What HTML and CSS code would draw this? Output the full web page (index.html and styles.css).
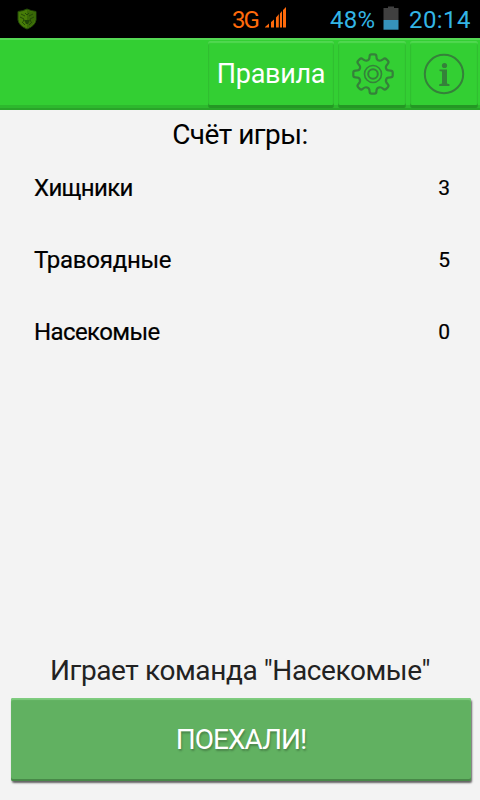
FILE: index.html
```
<!DOCTYPE html>
<html lang="ru">
  <head>
    <meta charset="UTF-8" />
    <meta name="viewport" content="width=device-width, initial-scale=1.0" />
    <title>Счёт игры</title>
    <link rel="stylesheet" href="styles.css">
  </head>
  <body>
    <div class="status-bar">
      <svg class="shield" width="20" height="22" viewBox="0 0 20 22">
        <path d="M10 1 Q14 3 19 3.5 V12 Q18 18 10 21 Q2 18 1 12 V3.5 Q6 3 10 1z" fill="#477c08" stroke="#234a08" />
        <path d="M10 2 V20 Q17 17 18 12 V4 Q13 4 10 2z" fill="#396807" />
        <path d="M4 6 L8 8 M16 6 L12 8 M3 9 L7 11 L6 14 M17 9 L13 11 L14 14 M8 5 L10 7 L12 5 M5 14 L8 17 M15 14 L12 17" fill="none" stroke="#1f4507" stroke-width="0.9" />
        <path d="M7 12 H13 L11 16 H9z" fill="#1f4507" />
      </svg>
      <span class="network">3G</span>
      <svg class="signal" width="22" height="22" viewBox="0 0 22 22">
        <path d="M0 20.500 V20 L4 16.500 V20.500z M6 20.500 V15 L9 12.500 V20.500z M11 20.500 V10.500 L14 7 V20.500z M14.500 20.500 V7 L17 4 V20.500z M18 20.500 V3 L21 0 V20.500z" fill="#ff6a0b" />
        <path d="M5 11 V22 M10 8 V22 M14.300 4 V22 M17.500 2 V22" stroke="#000" />
      </svg>
      <span class="percent">48%</span>
      <svg class="battery" width="16" height="24" viewBox="0 0 16 24">
        <path d="M5 0.500 H11 V2 H15.500 V14 H0.500 V2 H5z" fill="#404040" />
        <path d="M0.500 14 H15.500 V23.700 H0.500z" fill="#3692ba" />
      </svg>
      <span class="clock">20:14</span>
    </div>

    <!-- Верхнее меню -->
    <div class="toolbar">
      <button class="tool rules">Правила</button>
      <button class="tool gear" aria-label="Настройки">
        <svg width="44" height="44" viewBox="-22 -22 44 44" fill="none" stroke="#35813a" stroke-width="2.200" stroke-linejoin="round">
          <path d="M-3.400 -17.500 Q-3.400 -19.700 -1.500 -19.700 H1.500 Q3.400 -19.700 3.400 -17.500 Q3.500 -13.500 6.500 -13.300 Q8 -13 10.300 -14.800 Q11.900 -16.200 13.200 -14.900 L14.900 -13.200 Q16.200 -11.900 14.800 -10.300 Q12 -7.500 13.300 -5 Q14 -3.400 17.500 -3.400 Q19.700 -3.400 19.700 -1.500 V1.500 Q19.700 3.400 17.500 3.400 Q14 3.400 13.300 5 Q12 7.500 14.800 10.300 Q16.200 11.900 14.900 13.200 L13.200 14.900 Q11.900 16.200 10.300 14.800 Q8 13 6.500 13.300 Q3.500 13.500 3.400 17.500 Q3.400 19.700 1.500 19.700 H-1.500 Q-3.400 19.700 -3.400 17.500 Q-3.500 13.500 -6.500 13.300 Q-8 13 -10.300 14.800 Q-11.900 16.200 -13.200 14.900 L-14.900 13.200 Q-16.200 11.900 -14.800 10.300 Q-12 7.500 -13.300 5 Q-14 3.400 -17.500 3.400 Q-19.700 3.400 -19.700 1.500 V-1.500 Q-19.700 -3.400 -17.500 -3.400 Q-14 -3.400 -13.300 -5 Q-12 -7.500 -14.800 -10.300 Q-16.200 -11.900 -14.900 -13.200 L-13.200 -14.900 Q-11.900 -16.200 -10.300 -14.800 Q-8 -13 -6.500 -13.300 Q-3.500 -13.500 -3.400 -17.500z" />
          <circle r="8.500" stroke-width="1.600" />
          <circle r="4.800" stroke-width="2" />
        </svg>
      </button>
      <button class="tool" aria-label="О программе">
        <svg width="44" height="44" viewBox="-22 -22 44 44" fill="#35813a">
          <circle r="19.200" fill="none" stroke="#35813a" stroke-width="2" />
          <circle cx="0.500" cy="-8.500" r="2.600" />
          <path d="M-4.500 -4.500 H3 V9.500 L5.500 10.300 V12 H-4.800 V10.300 L-2 9.500 V-2.500 L-4.500 -3z" />
        </svg>
      </button>
    </div>

    <!-- Счёт -->
    <div class="score">
      <h1 class="score-title">Счёт игры:</h1>
      <div class="team"><span class="predators">Хищники</span><span class="points">3</span></div>
      <div class="team"><span class="herbivores">Травоядные</span><span class="points">5</span></div>
      <div class="team"><span class="insects">Насекомые</span><span class="points">0</span></div>
    </div>

    <p class="turn">Играет команда "Насекомые"</p>
    <button class="start">ПОЕХАЛИ!</button>
  </body>
</html>
```
FILE: styles.css
```
* {
  box-sizing: border-box;
}
body {
  margin: 0;
  height: 800px;
  display: flex;
  flex-direction: column;
  background-color: #f3f3f3;
  font-family: Roboto, sans-serif;
  color: #000;
}
button {
  border: none;
  padding: 0;
  font-family: inherit;
  color: white;
  cursor: pointer;
}
.status-bar {
  height: 38px;
  display: flex;
  align-items: center;
  padding: 0 8px 0 17px;
  background-color: #000;
  color: #33b5e5;
  font-size: 24px;
}
.network {
  margin-left: auto;
  width: 26px;
  color: #ff6a0b;
  font-size: 24px;
  letter-spacing: -2px;
  padding-top: 2px;
}
.signal {
  margin-left: 7px;
  margin-bottom: 2px;
}
.percent {
  width: 46px;
  margin-left: 43px;
  padding-top: 2px;
  letter-spacing: 0.3px;
}
.battery {
  margin-left: 7px;
  margin-bottom: 2px;
}
.clock {
  width: 63px;
  margin-left: 10px;
  padding-top: 2px;
  letter-spacing: 0.4px;
}
.toolbar {
  height: 72px;
  display: flex;
  justify-content: flex-end;
  gap: 4px;
  padding: 3px 2px 2px;
  background-color: #33cf33;
  background-image: linear-gradient(to bottom, #54d954 2px, transparent 2px, transparent 67px, #2db92d 67px, #2db92d 70px, #29a529 70px);
}
.tool {
  width: 68px;
  height: 67px;
  display: flex;
  align-items: center;
  justify-content: center;
  padding-bottom: 1px;
  border-radius: 2px;
  background-color: #33cf33;
  box-shadow: inset 0 2px 1px #50d750, inset 0 -3px 0 #249724, inset 1px 0 1px #2dbb2d, inset -1px 0 1px #2dbb2d;
}
.rules {
  width: 126px;
  padding-bottom: 2px;
  font-size: 27px;
  letter-spacing: -0.3px;
}
.gear {
  padding-left: 2px;
}
.score {
  flex: 1;
}
.score-title {
  height: 42px;
  margin: 0;
  padding-top: 5px;
  text-align: center;
  font-size: 28px;
  font-weight: 400;
  letter-spacing: -0.5px;
  line-height: 40px;
}
.team {
  height: 72px;
  display: flex;
  justify-content: space-between;
  padding: 0 30px 0 34px;
  font-size: 24px;
  line-height: 72px;
  -webkit-text-stroke: 0.2px;
}
.predators {
  letter-spacing: -0.65px;
}
.herbivores {
  letter-spacing: -0.25px;
}
.insects {
  letter-spacing: -0.6px;
}
.points {
  font-size: 21px;
}
.turn {
  margin: 0;
  height: 48px;
  line-height: 42px;
  text-align: center;
  font-size: 28px;
  letter-spacing: -0.4px;
  color: #222;
}
.start {
  flex: none;
  height: 83px;
  margin: 0 9px 19px 11px;
  border-radius: 2px;
  background-color: #61b161;
  font-size: 28px;
  letter-spacing: -0.95px;
  text-shadow: 1px 2px 2px rgba(0, 0, 0, 0.25);
  box-shadow: inset 0 2px 1px #7fcc7f, inset 0 -2px 0 #488848, 1px 2px 2px rgba(0, 0, 0, 0.6);
}
```
